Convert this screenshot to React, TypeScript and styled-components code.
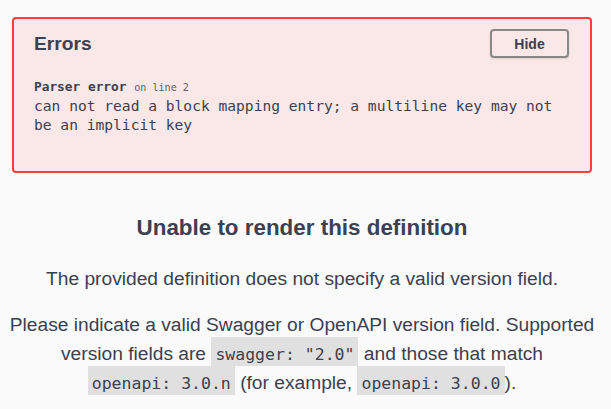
import React from "react";
import styled, { createGlobalStyle } from "styled-components";

const GlobalStyle = createGlobalStyle`
  html, body {
    margin: 0;
    padding: 0;
    background: #fafafa;
  }
  body {
    font-family: "Liberation Sans", Arial, sans-serif;
    color: #3b4151;
  }
`;

const Page = styled.div`
  width: 604px;
  padding-top: 17px;
`;

const ErrorsBox = styled.section`
  margin: 0 12px;
  padding: 10px 20px 37px;
  background: #fae7e7;
  border: 2px solid #f93e3e;
  border-radius: 4px;
`;

const ErrorsHeader = styled.div`
  display: flex;
  justify-content: space-between;
  align-items: center;
`;

const ErrorsTitle = styled.h4`
  margin: 0;
  font-size: 19.2px;
  font-weight: 700;
  line-height: 29px;
`;

const HideButton = styled.button`
  width: 79px;
  height: 29px;
  margin-right: 1px;
  background: transparent;
  border: 2px solid #888;
  border-radius: 4px;
  box-shadow: 0 1px 2px rgba(0, 0, 0, 0.1);
  font-family: "Liberation Sans", Arial, sans-serif;
  font-size: 14px;
  font-weight: 700;
  color: #3b4151;
  cursor: pointer;
`;

const ErrorItem = styled.div`
  margin-top: 19px;
  font-family: "DejaVu Sans Mono", monospace;
`;

const ErrorSource = styled.div`
  font-size: 12.8px;
  font-weight: 700;
  line-height: 19px;
`;

const LineInfo = styled.small`
  font-size: 10.1px;
  font-weight: 400;
  line-height: 1;
  color: #606060;
`;

const ErrorMessage = styled.div`
  font-size: 14.6px;
  line-height: 19px;
`;

const Pragma = styled.div`
  margin-top: 42px;
  text-align: center;
`;

const PragmaTitle = styled.h3`
  margin: 0;
  font-size: 22.4px;
  font-weight: 700;
  line-height: 26px;
`;

const PragmaText = styled.p<{ $gap: number }>`
  margin: ${(p) => p.$gap}px 0 0;
  font-size: 19.2px;
  line-height: 28.4px;
`;

const Code = styled.code`
  padding: 8px 4px 2px;
  background: #e0e0e0;
  font-family: "DejaVu Sans Mono", monospace;
  font-size: 16.5px;
  white-space: nowrap;
`;

export default function App() {
  return (
    <Page>
      <GlobalStyle />
      <ErrorsBox>
        <ErrorsHeader>
          <ErrorsTitle>Errors</ErrorsTitle>
          <HideButton>Hide</HideButton>
        </ErrorsHeader>
        <ErrorItem>
          <ErrorSource>
            Parser error <LineInfo>on line 2</LineInfo>
          </ErrorSource>
          <ErrorMessage>
            can not read a block mapping entry; a multiline key may not be an
            implicit key
          </ErrorMessage>
        </ErrorItem>
      </ErrorsBox>
      <Pragma>
        <PragmaTitle>Unable to render this definition</PragmaTitle>
        <PragmaText $gap={24}>
          The provided definition does not specify a valid version field.
        </PragmaText>
        <PragmaText $gap={18}>
          Please indicate a valid Swagger or OpenAPI version field. Supported
          version fields are <Code>swagger: "2.0"</Code> and those that match{" "}
          <Code>openapi: 3.0.n</Code> (for example, <Code>openapi: 3.0.0</Code>).
        </PragmaText>
      </Pragma>
    </Page>
  );
}
